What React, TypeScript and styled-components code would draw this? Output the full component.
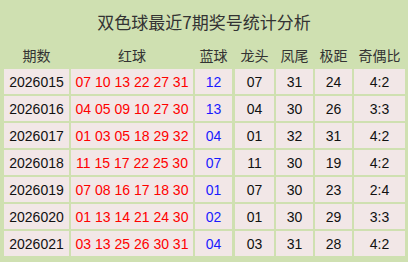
import React from "react";
import styled, { createGlobalStyle } from "styled-components";

const GlobalStyle = createGlobalStyle`
  body {
    margin: 0;
    font-family: "Liberation Sans", "Noto Sans CJK SC", sans-serif;
  }
`;

const Panel = styled.div`
  width: 408px;
  height: 262px;
  box-sizing: border-box;
  padding: 0 4px;
  background: #cfe0b1;
  display: flex;
  flex-direction: column;
`;

const Title = styled.div`
  height: 42px;
  display: flex;
  align-items: center;
  justify-content: center;
  font-family: "Noto Sans CJK SC", sans-serif;
  font-size: 17px;
  color: #333;
`;

const Tables = styled.div`
  display: flex;
  gap: 3px;
`;

const Grid = styled.div<{ $cols: string }>`
  display: grid;
  grid-template-columns: ${(p) => p.$cols};
  grid-template-rows: 25px;
  grid-auto-rows: 25px;
  column-gap: 2px;
  row-gap: 2px;
`;

const Head = styled.div`
  display: flex;
  align-items: center;
  justify-content: center;
  font-family: "Noto Sans CJK SC", sans-serif;
  font-size: 14px;
  color: #333;
`;

const Cell = styled.div<{ $tone?: "red" | "blue" }>`
  display: flex;
  align-items: center;
  justify-content: center;
  background: #f2e7e7;
  font-size: 14px;
  color: ${(p) => (p.$tone === "red" ? "#ff0000" : p.$tone === "blue" ? "#1a1aff" : "#111")};
  white-space: pre;
`;

type Draw = {
  issue: string;
  reds: string;
  blue: string;
  head: string;
  tail: string;
  span: string;
  ratio: string;
};

const draws: Draw[] = [
  { issue: "2026015", reds: "07 10 13 22 27 31", blue: "12", head: "07", tail: "31", span: "24", ratio: "4:2" },
  { issue: "2026016", reds: "04 05 09 10 27 30", blue: "13", head: "04", tail: "30", span: "26", ratio: "3:3" },
  { issue: "2026017", reds: "01 03 05 18 29 32", blue: "04", head: "01", tail: "32", span: "31", ratio: "4:2" },
  { issue: "2026018", reds: "11 15 17 22 25 30", blue: "07", head: "11", tail: "30", span: "19", ratio: "4:2" },
  { issue: "2026019", reds: "07 08 16 17 18 30", blue: "01", head: "07", tail: "30", span: "23", ratio: "2:4" },
  { issue: "2026020", reds: "01 13 14 21 24 30", blue: "02", head: "01", tail: "30", span: "29", ratio: "3:3" },
  { issue: "2026021", reds: "03 13 25 26 30 31", blue: "04", head: "03", tail: "31", span: "28", ratio: "4:2" },
];

export default function App() {
  return (
    <>
      <GlobalStyle />
      <Panel>
        <Title>双色球最近7期奖号统计分析</Title>
        <Tables>
          <Grid $cols="65px 122px 37px">
            <Head>期数</Head>
            <Head>红球</Head>
            <Head>蓝球</Head>
            {draws.map((d) => (
              <React.Fragment key={d.issue}>
                <Cell>{d.issue}</Cell>
                <Cell $tone="red">{d.reds}</Cell>
                <Cell $tone="blue">{d.blue}</Cell>
              </React.Fragment>
            ))}
          </Grid>
          <Grid $cols="39px 37px 37px 51px">
            <Head>龙头</Head>
            <Head>凤尾</Head>
            <Head>极距</Head>
            <Head>奇偶比</Head>
            {draws.map((d) => (
              <React.Fragment key={d.issue}>
                <Cell>{d.head}</Cell>
                <Cell>{d.tail}</Cell>
                <Cell>{d.span}</Cell>
                <Cell>{d.ratio}</Cell>
              </React.Fragment>
            ))}
          </Grid>
        </Tables>
      </Panel>
    </>
  );
}
